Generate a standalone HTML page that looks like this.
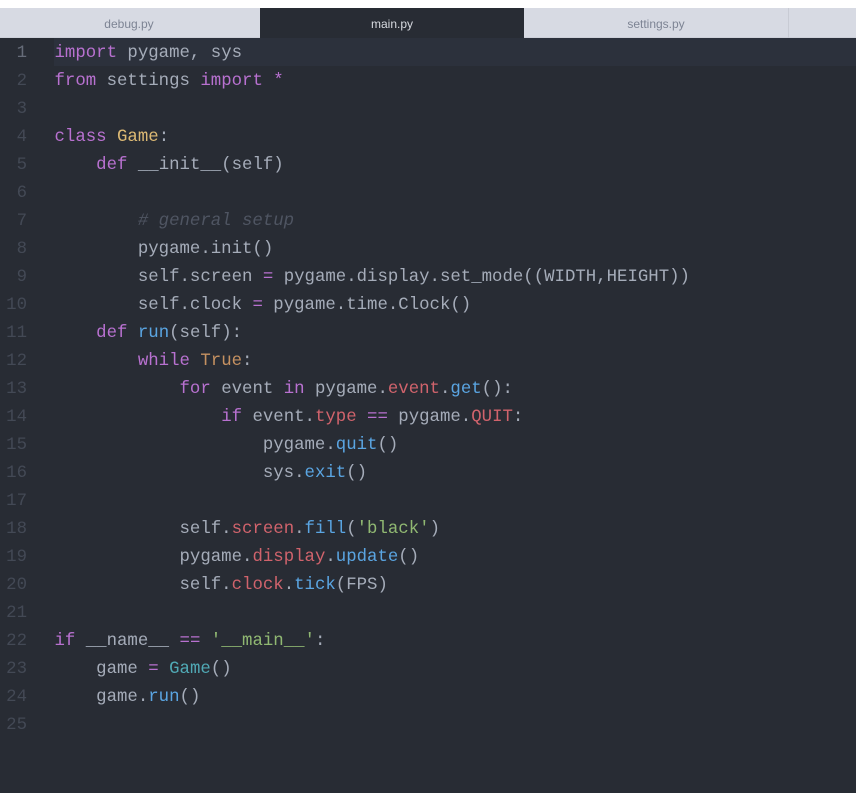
<!DOCTYPE html>
<html>
<head>
<meta charset="utf-8">
<style>
html,body{margin:0;padding:0;width:856px;height:793px;overflow:hidden;background:#fff}
#tabs{position:absolute;left:0;top:8px;width:856px;height:30px;background:#d7dae3;font:12px/32px "Liberation Sans",sans-serif;color:#7d8494}
.tab{position:absolute;top:0;height:30px;text-align:center}
#tabs .line{position:absolute;left:0;top:29px;width:856px;height:1px;background:#cdd0d9}
#ed{position:absolute;left:0;top:38px;width:856px;height:755px;background:#282c34}
#hl{position:absolute;left:54px;top:0;width:802px;height:28px;background:#2c313c}
.l{position:absolute;left:0;height:28px;width:856px;font:17.38px/32px "Liberation Mono",monospace;color:#a5acb9;white-space:pre}
.n{position:absolute;left:0;width:27px;text-align:right;color:#434955}
.c{position:absolute;left:54.5px}
.k{color:#b871d0}.y{color:#dcb974}.o{color:#c59161}.b{color:#5aa5e2}.r{color:#d0636c}.g{color:#90b872}.t{color:#50a9b5}.m{color:#4f5562;font-style:italic}
</style>
</head>
<body>
<div id="tabs">
<div class="line"></div>
<div class="tab" style="left:0;width:258px">debug.py</div>
<div class="tab" style="left:260px;width:264px;background:#282c34;color:#d7dae0">main.py</div>
<div class="tab" style="left:524px;width:264px;border-right:1px solid #c8cbd4">settings.py</div>
</div>
<div id="ed">
<div id="hl"></div>
<div class="l" style="top:0"><span class="n" style="color:#666c79">1</span><span class="c"><span class="k">import</span> pygame, sys</span></div>
<div class="l" style="top:28px"><span class="n">2</span><span class="c"><span class="k">from</span> settings <span class="k">import</span> <span class="k">*</span></span></div>
<div class="l" style="top:56px"><span class="n">3</span></div>
<div class="l" style="top:84px"><span class="n">4</span><span class="c"><span class="k">class</span> <span class="y">Game</span>:</span></div>
<div class="l" style="top:112px"><span class="n">5</span><span class="c">    <span class="k">def</span> __init__(self)</span></div>
<div class="l" style="top:140px"><span class="n">6</span></div>
<div class="l" style="top:168px"><span class="n">7</span><span class="c">        <span class="m"># general setup</span></span></div>
<div class="l" style="top:196px"><span class="n">8</span><span class="c">        pygame.init()</span></div>
<div class="l" style="top:224px"><span class="n">9</span><span class="c">        self.screen <span class="k">=</span> pygame.display.set_mode((WIDTH,HEIGHT))</span></div>
<div class="l" style="top:252px"><span class="n">10</span><span class="c">        self.clock <span class="k">=</span> pygame.time.Clock()</span></div>
<div class="l" style="top:280px"><span class="n">11</span><span class="c">    <span class="k">def</span> <span class="b">run</span>(self):</span></div>
<div class="l" style="top:308px"><span class="n">12</span><span class="c">        <span class="k">while</span> <span class="o">True</span>:</span></div>
<div class="l" style="top:336px"><span class="n">13</span><span class="c">            <span class="k">for</span> event <span class="k">in</span> pygame.<span class="r">event</span>.<span class="b">get</span>():</span></div>
<div class="l" style="top:364px"><span class="n">14</span><span class="c">                <span class="k">if</span> event.<span class="r">type</span> <span class="k">==</span> pygame.<span class="r">QUIT</span>:</span></div>
<div class="l" style="top:392px"><span class="n">15</span><span class="c">                    pygame.<span class="b">quit</span>()</span></div>
<div class="l" style="top:420px"><span class="n">16</span><span class="c">                    sys.<span class="b">exit</span>()</span></div>
<div class="l" style="top:448px"><span class="n">17</span></div>
<div class="l" style="top:476px"><span class="n">18</span><span class="c">            self.<span class="r">screen</span>.<span class="b">fill</span>(<span class="g">'black'</span>)</span></div>
<div class="l" style="top:504px"><span class="n">19</span><span class="c">            pygame.<span class="r">display</span>.<span class="b">update</span>()</span></div>
<div class="l" style="top:532px"><span class="n">20</span><span class="c">            self.<span class="r">clock</span>.<span class="b">tick</span>(FPS)</span></div>
<div class="l" style="top:560px"><span class="n">21</span></div>
<div class="l" style="top:588px"><span class="n">22</span><span class="c"><span class="k">if</span> __name__ <span class="k">==</span> <span class="g">'__main__'</span>:</span></div>
<div class="l" style="top:616px"><span class="n">23</span><span class="c">    game <span class="k">=</span> <span class="t">Game</span>()</span></div>
<div class="l" style="top:644px"><span class="n">24</span><span class="c">    game.<span class="b">run</span>()</span></div>
<div class="l" style="top:672px"><span class="n">25</span></div>
</div>
</body>
</html>
